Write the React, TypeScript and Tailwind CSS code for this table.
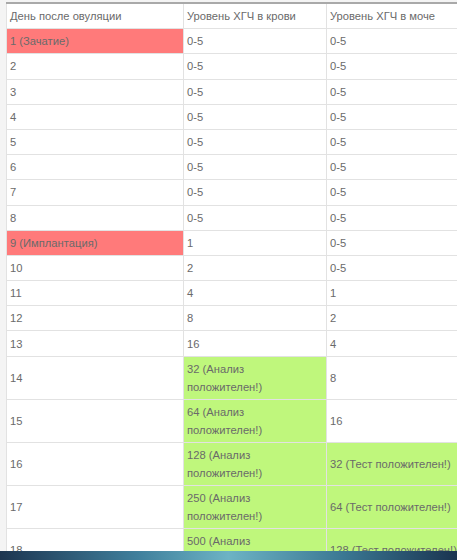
const RED = 'bg-[#ff7a7a]';
const GREEN = 'bg-[#bff77c]';

type Row = { day: string; blood: string; urine: string; dayHi?: boolean; bloodHi?: boolean; urineHi?: boolean };

const rows: Row[] = [
  { day: '1 (Зачатие)', blood: '0-5', urine: '0-5', dayHi: true },
  { day: '2', blood: '0-5', urine: '0-5' },
  { day: '3', blood: '0-5', urine: '0-5' },
  { day: '4', blood: '0-5', urine: '0-5' },
  { day: '5', blood: '0-5', urine: '0-5' },
  { day: '6', blood: '0-5', urine: '0-5' },
  { day: '7', blood: '0-5', urine: '0-5' },
  { day: '8', blood: '0-5', urine: '0-5' },
  { day: '9 (Имплантация)', blood: '1', urine: '0-5', dayHi: true },
  { day: '10', blood: '2', urine: '0-5' },
  { day: '11', blood: '4', urine: '1' },
  { day: '12', blood: '8', urine: '2' },
  { day: '13', blood: '16', urine: '4' },
  { day: '14', blood: '32 (Анализ положителен!)', urine: '8', bloodHi: true },
  { day: '15', blood: '64 (Анализ положителен!)', urine: '16', bloodHi: true },
  { day: '16', blood: '128 (Анализ положителен!)', urine: '32 (Тест положителен!)', bloodHi: true, urineHi: true },
  { day: '17', blood: '250 (Анализ положителен!)', urine: '64 (Тест положителен!)', bloodHi: true, urineHi: true },
  { day: '18', blood: '500 (Анализ положителен!)', urine: '128 (Тест положителен!)', bloodHi: true, urineHi: true },
];

const cell = 'border border-[#e2e2e2] px-[3px] py-[3.1px] align-middle text-left font-normal whitespace-nowrap';

// blood values wrap after the first word in the reference
function Blood({ text }: { text: string }) {
  const i = text.lastIndexOf(' ');
  if (!text.includes('(')) return <>{text}</>;
  return (
    <>
      {text.slice(0, i)}
      <br />
      {text.slice(i + 1)}
    </>
  );
}

export default function App() {
  return (
    <div
      className="relative w-[457px] h-[560px] overflow-hidden bg-[#f4f4f4] pt-[2px] pl-[6px] text-[11.2px] leading-[18px] text-[#6a6a6a]"
      style={{ fontFamily: '"Liberation Sans", Arial, sans-serif' }}
    >
      <table className="w-[460px] table-fixed border-collapse bg-white border-t-2 border-t-[#a9a9a9]">
        <colgroup>
          <col className="w-[177px]" />
          <col className="w-[143px]" />
          <col className="w-[140px]" />
        </colgroup>
        <thead>
          <tr>
            <th className={cell}>День после овуляции</th>
            <th className={cell}>Уровень ХГЧ в крови</th>
            <th className={cell}>Уровень ХГЧ в моче</th>
          </tr>
        </thead>
        <tbody>
          {rows.map((r) => (
            <tr key={r.day}>
              <td className={`${cell} ${r.dayHi ? RED : ''}`}>{r.day}</td>
              <td className={`${cell} ${r.bloodHi ? GREEN : ''}`}>
                <Blood text={r.blood} />
              </td>
              <td className={`${cell} ${r.urineHi ? GREEN : ''}`}>{r.urine}</td>
            </tr>
          ))}
        </tbody>
      </table>
      {/* video player strip at the bottom */}
      <div className="absolute left-0 right-0 bottom-0 h-[9px] bg-[linear-gradient(90deg,#1d3550_0%,#3f7f9c_30%,#6db3c4_50%,#3b7893_75%,#1a3450_100%)]" />
    </div>
  );
}
